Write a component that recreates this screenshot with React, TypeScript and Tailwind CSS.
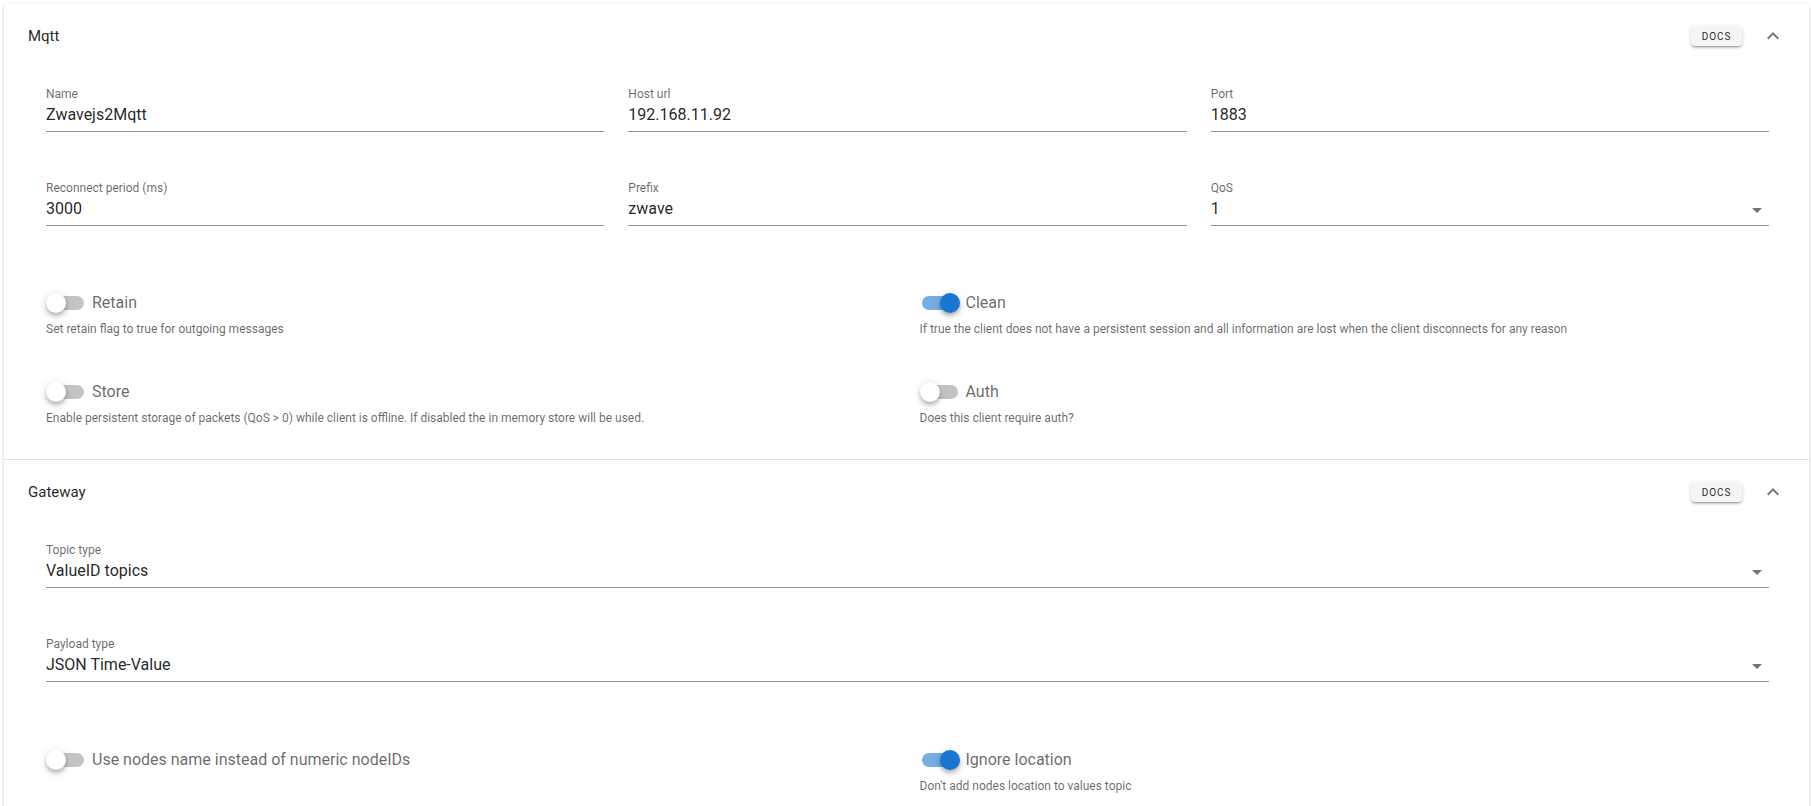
import type { ReactNode } from 'react'

type FieldProps = { label: string; value: string; select?: boolean }

function TextField({ label, value, select }: FieldProps) {
  return (
    <div>
      <div className="h-[16px] text-[12px] leading-[16px] text-black/60">{label}</div>
      <div className="mt-px flex h-[29px] items-start border-b border-black/[0.42]">
        <span className="flex-1 text-[16px] leading-[24px] text-black/[0.87]">{value}</span>
        {select && (
          <svg viewBox="0 0 24 24" className="mt-[1px] h-6 w-6 fill-black/[0.54]">
            <path d="M7 10l5 5 5-5z" />
          </svg>
        )}
      </div>
    </div>
  )
}

type ToggleProps = { label: string; hint?: string; on?: boolean }

function Toggle({ label, hint, on }: ToggleProps) {
  return (
    <div>
      <div className="flex h-[24px] items-center">
        <div className="relative h-[24px] w-[38px] shrink-0">
          <div
            className={
              on
                ? 'absolute left-[2px] top-[5px] h-[14px] w-[36px] rounded-full bg-[#1976d2]/60'
                : 'absolute left-[2px] top-[5px] h-[14px] w-[36px] rounded-full bg-black/[0.23]'
            }
          />
          <div
            className={
              on
                ? 'absolute left-[20px] top-[2px] h-5 w-5 rounded-full bg-[#1976d2] shadow-[0_2px_4px_-1px_rgba(0,0,0,0.2),0_4px_5px_0_rgba(0,0,0,0.14),0_1px_10px_0_rgba(0,0,0,0.12)]'
                : 'absolute left-0 top-[2px] h-5 w-5 rounded-full bg-white shadow-[0_2px_4px_-1px_rgba(0,0,0,0.2),0_4px_5px_0_rgba(0,0,0,0.14),0_1px_10px_0_rgba(0,0,0,0.12)]'
            }
          />
        </div>
        <span className="ml-[8px] text-[16px] leading-[24px] text-black/60">{label}</span>
      </div>
      {hint && <div className="mt-[7px] text-[12px] leading-[14px] text-black/60">{hint}</div>}
    </div>
  )
}

function PanelHeader({ title }: { title: string }) {
  return (
    <div className="flex h-[64px] items-center px-[24px]">
      <span className="flex-1 text-[15px] text-black/[0.87]">{title}</span>
      <button className="flex h-[20px] w-[51px] items-center justify-center rounded-[4px] bg-[#f5f5f5] text-[10px] font-normal uppercase tracking-[0.09em] text-black/[0.87] shadow-[0_3px_1px_-2px_rgba(0,0,0,0.2),0_2px_2px_0_rgba(0,0,0,0.14),0_1px_5px_0_rgba(0,0,0,0.12)]">
        Docs
      </button>
      <svg viewBox="0 0 24 24" className="ml-[19px] h-6 w-6 fill-black/[0.54]">
        <path d="M7.41,15.41L12,10.83L16.59,15.41L18,14L12,8L6,14L7.41,15.41Z" />
      </svg>
    </div>
  )
}

function Panel({ title, children, first }: { title: string; children: ReactNode; first?: boolean }) {
  return (
    <div className={first ? '' : 'border-t border-black/[0.12]'}>
      <PanelHeader title={title} />
      {children}
    </div>
  )
}

export default function App() {
  return (
    <div className="min-h-screen bg-white pl-[4px] pr-[2px] pt-[4px] font-['Roboto',sans-serif]">
      <div className="rounded-[4px] bg-white shadow-[0_3px_1px_-2px_rgba(0,0,0,0.2),0_2px_2px_0_rgba(0,0,0,0.14),0_1px_5px_0_rgba(0,0,0,0.12)]">
        <Panel title="Mqtt" first>
          <div className="pb-[34px] pl-[42px] pr-[40px] pt-[18px]">
            <div className="grid grid-cols-3 gap-x-6 gap-y-[48px]">
              <TextField label="Name" value="Zwavejs2Mqtt" />
              <TextField label="Host url" value="192.168.11.92" />
              <TextField label="Port" value="1883" />
              <TextField label="Reconnect period (ms)" value="3000" />
              <TextField label="Prefix" value="zwave" />
              <TextField label="QoS" value="1" select />
            </div>
            <div className="mt-[65px] grid grid-cols-2 gap-x-6 gap-y-[44px]">
              <Toggle label="Retain" hint="Set retain flag to true for outgoing messages" />
              <Toggle
                label="Clean"
                on
                hint="If true the client does not have a persistent session and all information are lost when the client disconnects for any reason"
              />
              <Toggle
                label="Store"
                hint="Enable persistent storage of packets (QoS > 0) while client is offline. If disabled the in memory store will be used."
              />
              <Toggle label="Auth" hint="Does this client require auth?" />
            </div>
          </div>
        </Panel>
        <Panel title="Gateway">
          <div className="pb-[40px] pl-[42px] pr-[40px] pt-[18px]">
            <div className="grid grid-cols-1 gap-y-[48px]">
              <TextField label="Topic type" value="ValueID topics" select />
              <TextField label="Payload type" value="JSON Time-Value" select />
            </div>
            <div className="mt-[66px] grid grid-cols-2 gap-x-6 gap-y-[44px]">
              <Toggle label="Use nodes name instead of numeric nodeIDs" />
              <Toggle label="Ignore location" on hint="Don't add nodes location to values topic" />
            </div>
          </div>
        </Panel>
      </div>
    </div>
  )
}
